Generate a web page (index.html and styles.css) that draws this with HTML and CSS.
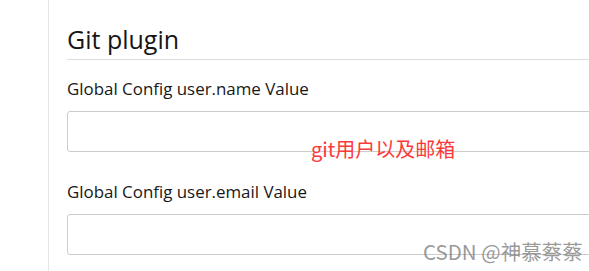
FILE: index.html
```html
<!DOCTYPE html>
<html lang="zh">
<head>
<meta charset="utf-8">
<link rel="stylesheet" href="styles.css">
</head>
<body>
<div class="page">
  <aside class="side"></aside>
  <main class="main">
    <h2 class="section-title">Git plugin</h2>
    <div class="field">
      <label class="field-label">Global Config user.name Value</label>
      <input class="field-input" type="text">
    </div>
    <div class="field">
      <label class="field-label">Global Config user.email Value</label>
      <input class="field-input" type="text">
    </div>
  </main>
</div>
<div class="note">git用户以及邮箱</div>
<div class="watermark">CSDN @神慕蔡蔡</div>
</body>
</html>
```
FILE: styles.css
```css
html, body {
  margin: 0;
  padding: 0;
  background: #fff;
  overflow: hidden;
  width: 589px;
  height: 271px;
}
body {
  font-family: "Open Sans", "Noto Sans CJK SC", sans-serif;
  color: #333;
  position: relative;
}
.page {
  display: flex;
  height: 271px;
}
.side {
  width: 48px;
  flex: none;
  border-right: 1px solid #e6e6e6;
}
.main {
  flex: 1;
  padding-left: 18px;
  padding-top: 22px;
  overflow: hidden;
}
.section-title {
  margin: 0;
  font-size: 25px;
  font-weight: 500;
  line-height: 34px;
  color: #151515;
  padding-bottom: 3px;
  border-bottom: 1px solid #dcdcdc;
}
.field {
  display: flex;
  flex-direction: column;
}
.field-label {
  font-size: 16.9px;
  font-weight: 500;
  line-height: 22px;
  margin-top: 18px;
  color: #181818;
}
.field-input {
  margin-top: 11px;
  width: 600px;
  height: 41px;
  box-sizing: border-box;
  border: 1px solid #ccc;
  border-radius: 3px;
  padding: 0;
  background: #fff;
}
.field + .field .field-label {
  margin-top: 29px;
}
.note {
  position: absolute;
  left: 311px;
  top: 136px;
  font-size: 20px;
  line-height: 26px;
  color: #fc3a3a;
  font-family: "Noto Sans CJK SC", sans-serif;
}
.watermark {
  position: absolute;
  left: 423px;
  top: 238px;
  font-size: 20.5px;
  line-height: 26px;
  color: rgba(120, 120, 120, 0.75);
  font-family: "Noto Sans CJK SC", sans-serif;
}
```
